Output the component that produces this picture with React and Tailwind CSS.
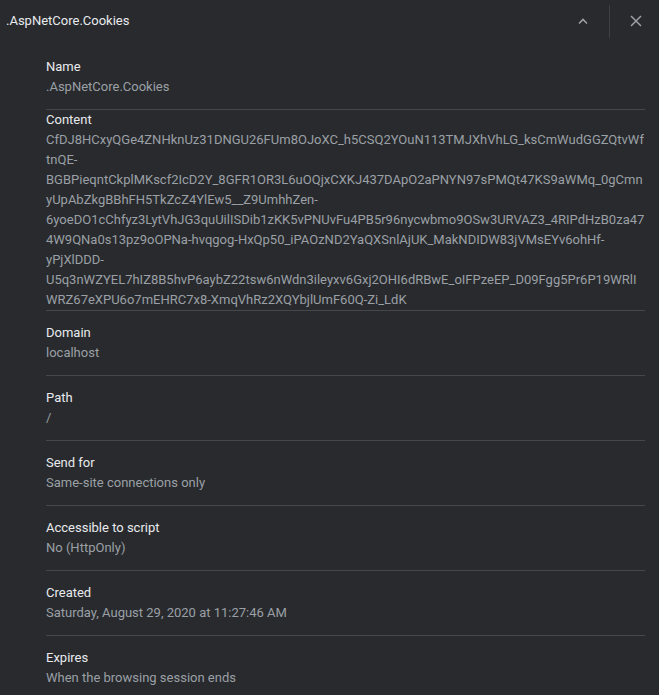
import React from 'react';

const contentLines = [
  'CfDJ8HCxyQGe4ZNHknUz31DNGU26FUm8OJoXC_h5CSQ2YOuN113TMJXhVhLG_ksCmWudGGZQtvWf',
  'tnQE-',
  'BGBPieqntCkplMKscf2IcD2Y_8GFR1OR3L6uOQjxCXKJ437DApO2aPNYN97sPMQt47KS9aWMq_0gCmn',
  'yUpAbZkgBBhFH5TkZcZ4YlEw5__Z9UmhhZen-',
  '6yoeDO1cChfyz3LytVhJG3quUilISDib1zKK5vPNUvFu4PB5r96nycwbmo9OSw3URVAZ3_4RIPdHzB0za47',
  '4W9QNa0s13pz9oOPNa-hvqgog-HxQp50_iPAOzND2YaQXSnlAjUK_MakNDIDW83jVMsEYv6ohHf-',
  'yPjXlDDD-',
  'U5q3nWZYEL7hIZ8B5hvP6aybZ22tsw6nWdn3ileyxv6Gxj2OHI6dRBwE_oIFPzeEP_D09Fgg5Pr6P19WRlI',
  'WRZ67eXPU6o7mEHRC7x8-XmqVhRz2XQYbjlUmF60Q-Zi_LdK',
];

// rows below the content block
const fields = [
  { label: 'Domain', value: 'localhost' },
  { label: 'Path', value: '/' },
  { label: 'Send for', value: 'Same-site connections only' },
  { label: 'Accessible to script', value: 'No (HttpOnly)' },
  { label: 'Created', value: 'Saturday, August 29, 2020 at 11:27:46 AM' },
  { label: 'Expires', value: 'When the browsing session ends', last: true },
];

function Field({ label, value, last }) {
  return (
    <div className={`pt-[12px] pb-[12px] ${last ? '' : 'border-b border-[#45474b]'}`}>
      <div className="text-[#e8eaed] leading-[20px]">{label}</div>
      <div className="text-[#9aa0a6] leading-[20px]">{value}</div>
    </div>
  );
}

export default function App() {
  return (
    <div
      className="w-[659px] h-[695px] bg-[#292a2d] overflow-hidden text-[13px]"
      style={{ fontFamily: 'Roboto, "Liberation Sans", sans-serif' }}
    >
      <div className="h-[42px] flex items-center">
        <div className="pl-[6px] flex-1 text-[#e8eaed]">.AspNetCore.Cookies</div>
        <button className="w-[28px] h-[28px] flex items-center justify-center text-[#9aa0a6]">
          <svg width="10" height="7" viewBox="0 0 10 7" fill="none">
            <polyline points="1,5.5 5,1.5 9,5.5" stroke="currentColor" strokeWidth="1.6" />
          </svg>
        </button>
        <div className="ml-[12px] w-px h-[33px] bg-[#3c4043] self-start mt-[5px]" />
        <button className="ml-[12px] mr-[9px] w-[28px] h-[28px] flex items-center justify-center text-[#9aa0a6]">
          <svg width="12" height="12" viewBox="0 0 12 12" fill="none">
            <path d="M1 1L11 11M11 1L1 11" stroke="currentColor" strokeWidth="1.5" />
          </svg>
        </button>
      </div>

      <div className="pl-[46px] pr-[14px]">
        <div className="pt-[15px] pb-[12px] border-b border-[#45474b]">
          <div className="text-[#e8eaed] leading-[20px]">Name</div>
          <div className="text-[#9aa0a6] leading-[20px]">.AspNetCore.Cookies</div>
        </div>

        <div className="border-b border-[#45474b]">
          <div className="text-[#e8eaed] leading-[20px]">Content</div>
          {contentLines.map((line, i) => (
            <div key={i} className="text-[#9aa0a6] leading-[20px] whitespace-nowrap">
              {line}
            </div>
          ))}
        </div>

        {fields.map((f) => (
          <Field key={f.label} {...f} />
        ))}
      </div>
    </div>
  );
}
